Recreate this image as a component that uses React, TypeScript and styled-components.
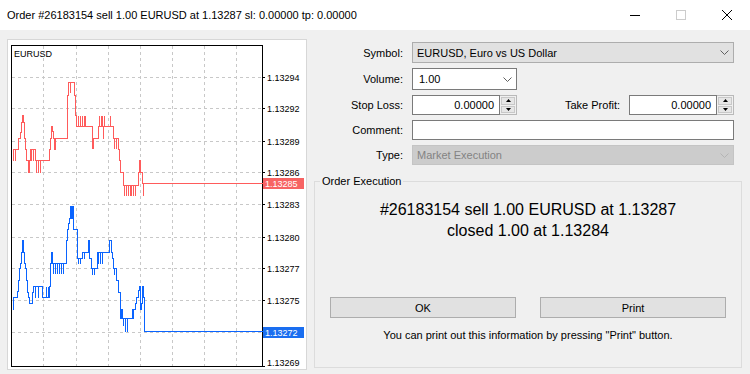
import styled, { createGlobalStyle } from 'styled-components';

const GlobalStyle = createGlobalStyle`
  html, body { margin: 0; padding: 0; }
  body {
    background: #f0f0f0;
    font-family: 'Liberation Sans', Arial, sans-serif;
    font-size: 11px;
    color: #000;
  }
`;

const Window = styled.div`
  width: 750px;
  height: 374px;
  display: flex;
  flex-direction: column;
  background: #f0f0f0;
  overflow: hidden;
`;

const TitleBar = styled.div`
  height: 30px;
  flex-shrink: 0;
  display: flex;
  align-items: center;
  background: #fff;
`;

const TitleText = styled.div`
  flex: 1;
  padding-left: 7px;
  font-size: 11px;
  white-space: nowrap;
`;

const CaptionButton = styled.div`
  width: 46px;
  height: 30px;
  display: flex;
  align-items: center;
  justify-content: center;
`;

const Body = styled.div`
  flex: 1;
  display: flex;
  gap: 7px;
  padding: 9px 8px 0 7px;
`;

const ChartPanel = styled.div`
  width: 300px;
  height: 331px;
  box-sizing: border-box;
  border: 1px solid #d7d7d7;
  background: #fff;
  flex-shrink: 0;
  svg { display: block; }
`;

const RightColumn = styled.div`
  flex: 1;
  display: flex;
  flex-direction: column;
  padding-top: 3px;
`;

const Form = styled.div`
  display: grid;
  grid-template-columns: 89px 1fr;
  grid-template-rows: 21px 22px 20px 20px 20px;
  column-gap: 9px;
  row-gap: 5px;
  padding-right: 8px;
`;

const Label = styled.label`
  align-self: center;
  text-align: right;
  white-space: nowrap;
`;

type SelectVariant = 'button' | 'white' | 'disabled';

const Select = styled.div<{ $variant: SelectVariant; $width?: number }>`
  box-sizing: border-box;
  height: 100%;
  width: ${(p) => (p.$width ? `${p.$width}px` : '100%')};
  display: flex;
  align-items: center;
  padding: 0 4px 0 ${(p) => (p.$variant === 'white' ? 6 : 4)}px;
  border: 1px solid
    ${(p) =>
      p.$variant === 'white' ? '#7a7a7a' : p.$variant === 'disabled' ? '#c4c4c4' : '#adadad'};
  background: ${(p) =>
    p.$variant === 'white' ? '#fff' : p.$variant === 'disabled' ? '#cccccc' : '#e1e1e1'};
  color: ${(p) => (p.$variant === 'disabled' ? '#838383' : '#000')};
  span { flex: 1; white-space: nowrap; }
`;

const FieldRow = styled.div`
  display: flex;
  align-items: stretch;
`;

const SideLabel = styled.label`
  flex: 1;
  align-self: center;
  text-align: right;
  padding-right: 9px;
  white-space: nowrap;
`;

const SpinBox = styled.div`
  width: 105px;
  display: flex;
`;

const NumberInput = styled.div`
  flex: 1;
  box-sizing: border-box;
  border: 1px solid #7a7a7a;
  background: #fff;
  display: flex;
  align-items: center;
  justify-content: flex-end;
  padding-right: 5px;
`;

const Spinner = styled.div`
  width: 17px;
  box-sizing: border-box;
  border: 1px solid #b9b9b9;
  border-left: none;
  background: #f0f0f0;
  display: flex;
  flex-direction: column;
`;

const SpinHalf = styled.div<{ $top?: boolean }>`
  flex: 1;
  margin: 1px;
  background: #e6e6e6;
  border: 1px solid #c8c8c8;
  ${(p) => (p.$top ? 'margin-bottom: 0;' : '')}
  display: flex;
  align-items: center;
  justify-content: center;
`;

const TextInput = styled.div`
  box-sizing: border-box;
  height: 100%;
  border: 1px solid #7a7a7a;
  background: #fff;
`;

const GroupBox = styled.div`
  position: relative;
  margin-top: 16px;
  height: 187px;
  box-sizing: border-box;
  border: 1px solid #dcdcdc;
  display: flex;
  flex-direction: column;
  align-items: center;
  padding: 17px 15px 0;
`;

const Legend = styled.span`
  position: absolute;
  top: -7px;
  left: 5px;
  padding: 0 2px;
  line-height: 13px;
  background: #f0f0f0;
`;

const Message = styled.div`
  font-size: 16px;
  line-height: 21px;
  text-align: center;
`;

const ButtonRow = styled.div`
  align-self: stretch;
  display: flex;
  gap: 24px;
  margin-top: 56px;
`;

const Button = styled.button`
  flex: 1;
  height: 21px;
  padding: 0;
  border: 1px solid #adadad;
  background: #e1e1e1;
  font-family: inherit;
  font-size: 11px;
  color: #000;
`;

const Note = styled.div`
  margin-top: 10px;
  line-height: 14px;
`;

const Chevron = ({ color = '#606060' }: { color?: string }) => (
  <svg width="9" height="5" viewBox="0 0 9 5">
    <polyline points="0.5,0.5 4.5,4.5 8.5,0.5" fill="none" stroke={color} strokeWidth="1" />
  </svg>
);

const Triangle = ({ up }: { up?: boolean }) => (
  <svg width="5" height="3" viewBox="0 0 5 3">
    <polygon points={up ? '2.5,0 5,3 0,3' : '0,0 5,0 2.5,3'} fill="#000" />
  </svg>
);

const Spin = ({ value }: { value: string }) => (
  <SpinBox>
    <NumberInput>{value}</NumberInput>
    <Spinner>
      <SpinHalf $top>
        <Triangle up />
      </SpinHalf>
      <SpinHalf>
        <Triangle />
      </SpinHalf>
    </Spinner>
  </SpinBox>
);

// chart drawn in panel-local coords; tick data below is in page coords
// [x, y, spike?] -> step to (x, y), optionally a tick flick to spike
type Tick = [number, number, number?];
const OX = 8;
const OY = 40;

const redTicks: Tick[] = [
  [12, 160], [13, 149], [15, 149, 160], [17, 149], [18, 138], [20, 132], [21, 122], [22, 115],
  [23, 122], [24, 138], [25, 149, 138], [26, 160], [28, 172], [29, 160], [30, 149], [31, 149, 160],
  [33, 149, 160], [35, 160], [36, 160, 172], [38, 160, 172], [40, 160, 172], [42, 160], [48, 160],
  [49, 149], [50, 138], [51, 126], [52, 131], [53, 138], [54, 149], [55, 138], [66, 138], [67, 95],
  [68, 82], [70, 82, 92], [72, 82], [74, 95], [75, 115], [76, 126], [78, 126, 115], [80, 126, 115],
  [82, 126, 115], [84, 126, 115], [85, 126, 115], [88, 126], [91, 126], [92, 148], [93, 138],
  [97, 138], [98, 126], [99, 126, 115], [101, 126, 115], [102, 126, 115], [103, 126, 138],
  [104, 126, 115], [107, 126], [110, 126, 115], [112, 126], [113, 138], [114, 138, 148],
  [116, 138, 148], [118, 149], [119, 160], [120, 172], [122, 172], [123, 185], [124, 185, 195],
  [126, 185, 195], [128, 185, 195], [130, 185, 195], [131, 185, 195], [133, 185, 195],
  [135, 185, 195], [137, 185], [138, 172], [139, 160], [140, 172], [142, 183], [143, 183, 195],
  [144, 183], [262, 183],
];

const blueTicks: Tick[] = [
  [12, 309], [13, 297], [16, 297], [17, 291], [18, 280], [19, 268], [20, 263], [21, 252], [22, 240],
  [23, 252], [24, 263], [25, 268], [26, 280], [27, 292], [28, 297], [29, 303], [31, 303], [32, 292],
  [33, 286], [35, 286, 297], [37, 286], [38, 286, 297], [40, 286], [42, 297], [44, 297],
  [46, 297, 286], [48, 297, 286], [49, 286], [50, 263], [51, 252], [52, 263], [53, 263, 273],
  [55, 263, 273], [57, 263, 273], [59, 263, 273], [61, 263, 273], [63, 263, 273], [65, 263],
  [66, 240], [67, 229], [68, 223], [69, 218], [70, 206], [71, 218], [72, 206], [73, 229], [76, 229],
  [77, 258], [78, 258, 263], [80, 258, 263], [82, 252], [84, 252, 258], [86, 252], [88, 240],
  [89, 258], [91, 268], [92, 268, 274], [94, 268, 274], [96, 268], [97, 252], [98, 252, 263],
  [100, 252, 263], [102, 252, 263], [104, 252], [108, 252], [109, 240], [110, 240], [111, 252],
  [112, 258], [113, 268], [114, 268, 274], [116, 280], [118, 292], [120, 318], [121, 309],
  [122, 318], [123, 318, 325], [125, 318, 331], [127, 318, 331], [129, 318], [131, 318], [132, 309],
  [133, 309, 318], [135, 303], [136, 297], [138, 290], [139, 286], [140, 309], [141, 303],
  [142, 286], [143, 297], [144, 331], [262, 331],
];

const stepPath = (pts: Tick[]) =>
  pts
    .map(([x, y, s], i) => {
      const px = x - OX + 0.5;
      const py = y - OY + 0.5;
      const seg = i === 0 ? `M${px} ${py}` : `H${px} V${py}`;
      return s === undefined ? seg : `${seg} M${px} ${s - OY + 0.5} V${py}`;
    })
    .join(' ');

const gridX = [43, 76, 108, 140, 172, 204, 236];
const levels: { y: number; price: string }[] = [
  { y: 77, price: '1.13294' },
  { y: 108, price: '1.13292' },
  { y: 141, price: '1.13289' },
  { y: 172, price: '1.13286' },
  { y: 204, price: '1.13283' },
  { y: 237, price: '1.13280' },
  { y: 268, price: '1.13277' },
  { y: 300, price: '1.13275' },
  { y: 332, price: '' },
];

const PriceChart = () => {
  const left = 11 - OX;
  const right = 262 - OX;
  const top = 45 - OY;
  const bottom = 366 - OY;
  const axisFont = { fontFamily: "'Liberation Sans', Arial, sans-serif", fontSize: 9 };
  return (
    <svg width="298" height="329" viewBox="0 0 298 329">
      <g shapeRendering="crispEdges">
        {gridX.map((x) => (
          <line
            key={x}
            x1={x - OX + 0.5}
            x2={x - OX + 0.5}
            y1={top + 1}
            y2={bottom}
            stroke="#c8c8c8"
            strokeDasharray="3 3"
          />
        ))}
        {levels.map((l) => (
          <g key={l.y}>
            <line
              x1={left + 1}
              x2={right}
              y1={l.y - OY + 0.5}
              y2={l.y - OY + 0.5}
              stroke="#c8c8c8"
              strokeDasharray="3 3"
            />
            <line x1={right} x2={right + 3} y1={l.y - OY + 0.5} y2={l.y - OY + 0.5} stroke="#000" />
          </g>
        ))}
        <line x1={right} x2={right + 3} y1={bottom + 0.5} y2={bottom + 0.5} stroke="#000" />
        <rect
          x={left + 0.5}
          y={top + 0.5}
          width={right - left}
          height={bottom - top}
          fill="none"
          stroke="#000"
        />
        <path d={stepPath(redTicks)} fill="none" stroke="#ff5b5b" strokeWidth="1" />
        <path d={stepPath(blueTicks)} fill="none" stroke="#0a64ff" strokeWidth="1" />
        <rect x={263 - OX} y={178 - OY} width={41} height={11} fill="#f76363" />
        <rect x={263 - OX} y={327 - OY} width={41} height={11} fill="#1a6ef0" />
      </g>
      {levels
        .filter((l) => l.price)
        .map((l) => (
          <text key={l.price} x={259} y={l.y - OY + 3.5} style={axisFont} fill="#000">
            {l.price}
          </text>
        ))}
      <text x={259} y={362 - OY + 3.5} style={axisFont} fill="#000">
        1.13269
      </text>
      <text x={14 - OX} y={57 - OY} style={axisFont} fill="#000">
        EURUSD
      </text>
      <text x={265 - OX} y={187 - OY} style={axisFont} fill="#fff">
        1.13285
      </text>
      <text x={265 - OX} y={336 - OY} style={axisFont} fill="#fff">
        1.13272
      </text>
    </svg>
  );
};

export default function App() {
  return (
    <>
      <GlobalStyle />
      <Window>
        <TitleBar>
          <TitleText>Order #26183154 sell 1.00 EURUSD at 1.13287 sl: 0.00000 tp: 0.00000</TitleText>
          <CaptionButton>
            <svg width="10" height="10" viewBox="0 0 10 10">
              <line x1="0" x2="10" y1="5.5" y2="5.5" stroke="#000" />
            </svg>
          </CaptionButton>
          <CaptionButton>
            <svg width="10" height="10" viewBox="0 0 10 10">
              <rect x="0.5" y="0.5" width="9" height="9" fill="none" stroke="#cccccc" />
            </svg>
          </CaptionButton>
          <CaptionButton>
            <svg width="10" height="10" viewBox="0 0 10 10">
              <path d="M0 0 L10 10 M10 0 L0 10" stroke="#000" strokeWidth="1" />
            </svg>
          </CaptionButton>
        </TitleBar>
        <Body>
          <ChartPanel>
            <PriceChart />
          </ChartPanel>
          <RightColumn>
            <Form>
              <Label>Symbol:</Label>
              <Select $variant="button">
                <span>EURUSD, Euro vs US Dollar</span>
                <Chevron />
              </Select>
              <Label>Volume:</Label>
              <Select $variant="white" $width={105}>
                <span>1.00</span>
                <Chevron />
              </Select>
              <Label>Stop Loss:</Label>
              <FieldRow>
                <Spin value="0.00000" />
                <SideLabel>Take Profit:</SideLabel>
                <Spin value="0.00000" />
              </FieldRow>
              <Label>Comment:</Label>
              <TextInput />
              <Label>Type:</Label>
              <Select $variant="disabled">
                <span>Market Execution</span>
                <Chevron color="#b4b4b4" />
              </Select>
            </Form>
            <GroupBox>
              <Legend>Order Execution</Legend>
              <Message>
                #26183154 sell 1.00 EURUSD at 1.13287
                <br />
                closed 1.00 at 1.13284
              </Message>
              <ButtonRow>
                <Button>OK</Button>
                <Button>Print</Button>
              </ButtonRow>
              <Note>You can print out this information by pressing "Print" button.</Note>
            </GroupBox>
          </RightColumn>
        </Body>
      </Window>
    </>
  );
}
